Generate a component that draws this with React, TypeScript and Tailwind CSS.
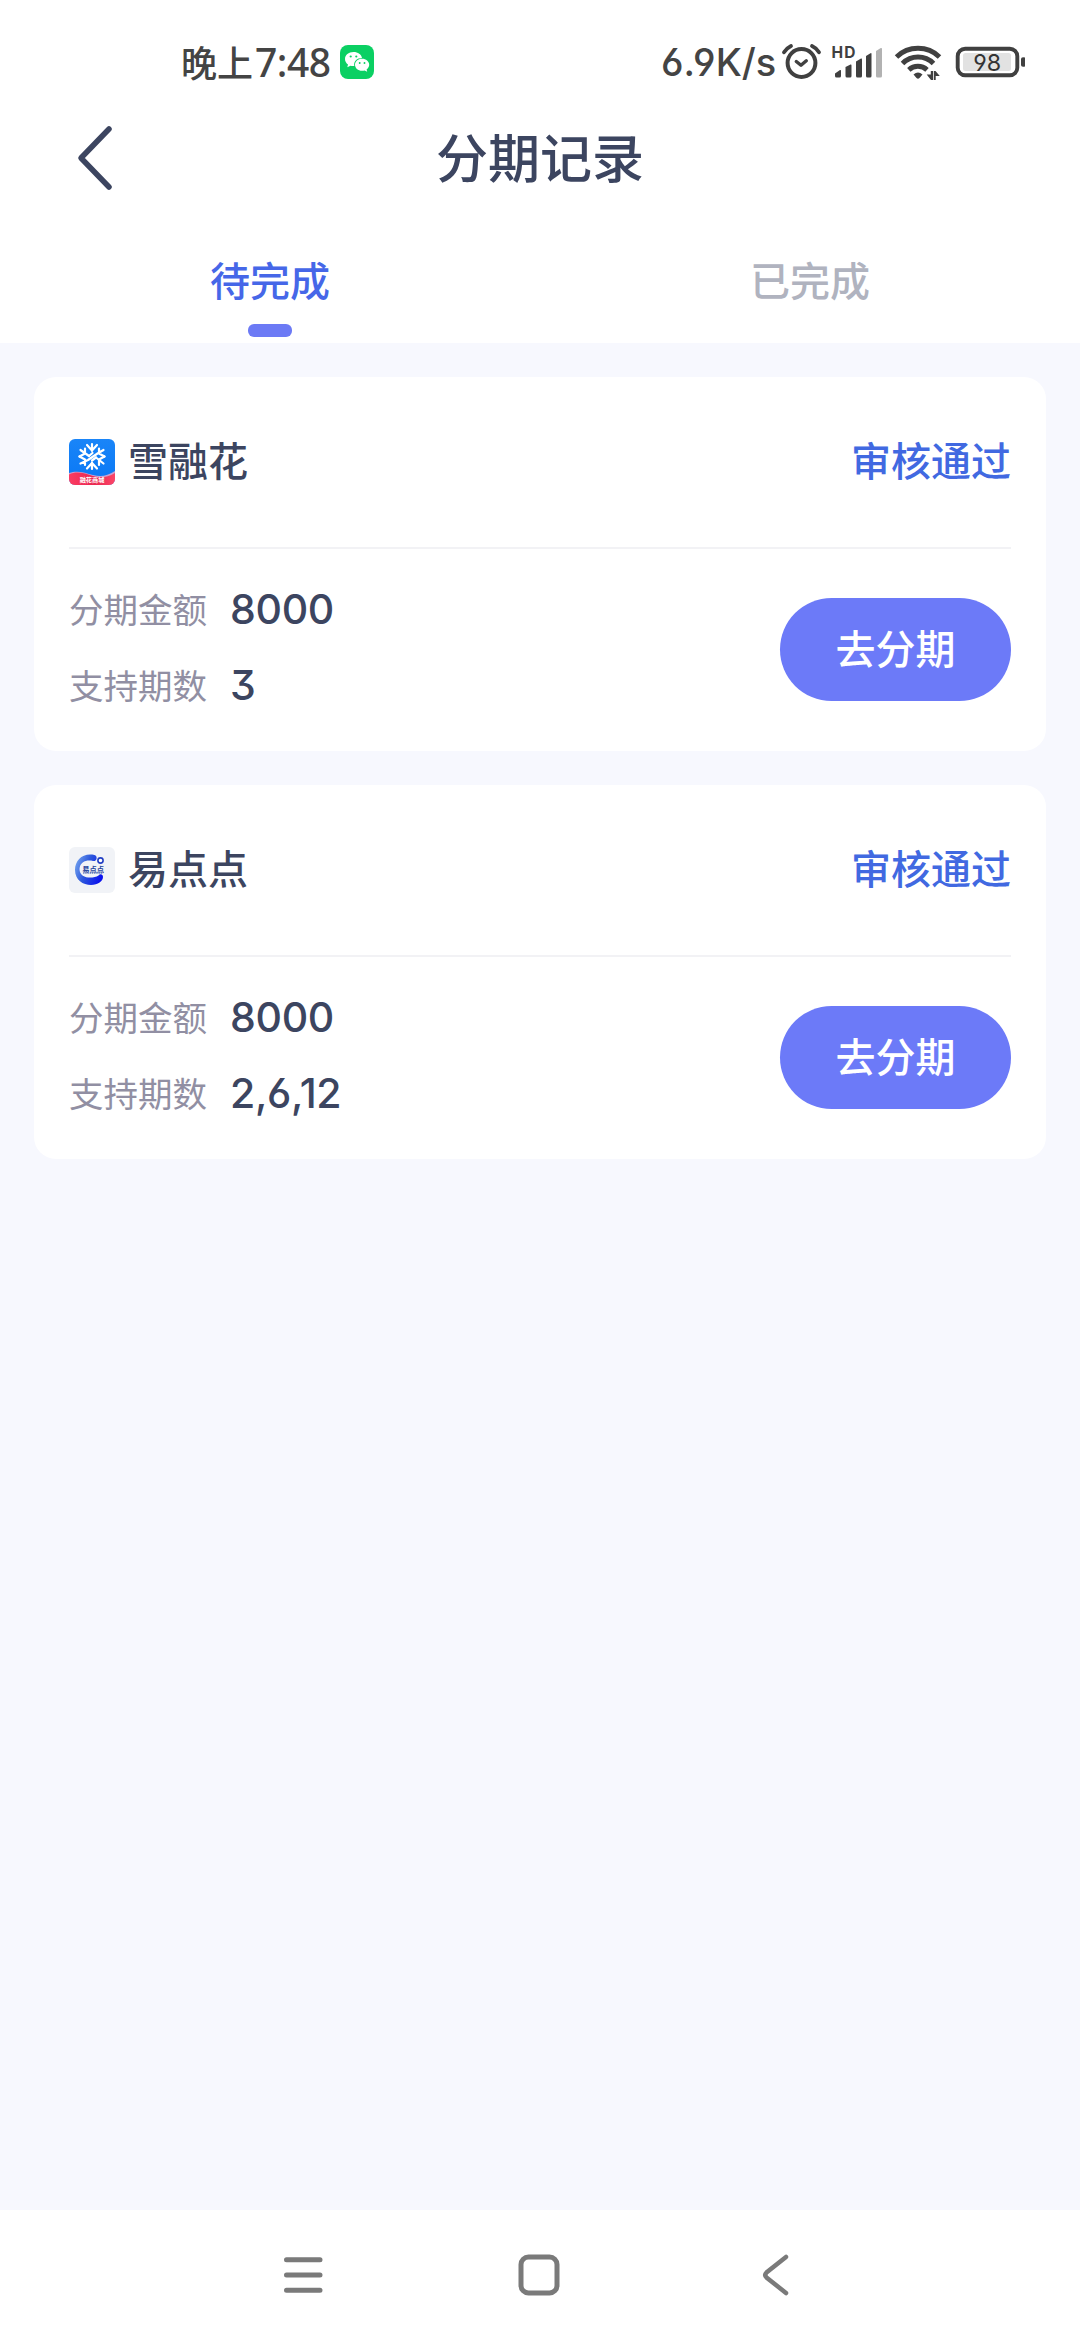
import { useState } from 'react';

interface RecordItem {
    id: number;
    name: string;
    status: string;
    amount: string;
    periods: string;
    logo: 'snow' | 'dots';
}

const records: RecordItem[] = [
    { id: 1, name: '雪融花', status: '审核通过', amount: '8000', periods: '3', logo: 'snow' },
    { id: 2, name: '易点点', status: '审核通过', amount: '8000', periods: '2,6,12', logo: 'dots' },
];

const tabs = ['待完成', '已完成'];

function SnowLogo() {
    return (
        <svg width="46" height="46" viewBox="0 0 46 46" className="rounded-[6px]">
            <defs>
                <linearGradient id="snowBg" x1="0" y1="0" x2="0" y2="1">
                    <stop offset="0" stopColor="#1a85f8" />
                    <stop offset="1" stopColor="#0877f5" />
                </linearGradient>
                <linearGradient id="snowRed" x1="0" y1="0" x2="1" y2="0">
                    <stop offset="0" stopColor="#fb3c62" />
                    <stop offset="0.55" stopColor="#ea2750" />
                    <stop offset="1" stopColor="#fb4668" />
                </linearGradient>
            </defs>
            <rect width="46" height="46" fill="url(#snowBg)" />
            <path d="M0 34C9 31 16 34 24 36S38 37 46 32V46H0Z" fill="#c9a0d0" />
            <path d="M0 35.5C8 31.5 16 34.5 24 37S38 38.5 46 34V46H0Z" fill="url(#snowRed)" />
            <g stroke="#fff" strokeWidth="2.2" strokeLinecap="round" strokeLinejoin="round" fill="none">
                <path d="M23 5V12M18 6L23 11.5L28 6" />
                <path d="M23 30V23.500M18 29.500L23 24L28 29.500" />
                <path d="M11.500 11L20 17M10.500 17.500L16 14.500V9.500" />
                <path d="M34.500 24.500L27 18.500M35.500 17.500L30 20.500V26" />
                <path d="M34.500 11L28.500 14.500L19 21L11.500 24.500M30 9.500V14.500L35.500 17.500M10.500 17.500L16 20.500V26" />
                <path d="M20 17L23.500 14M27 18.500L23 21.500" />
            </g>
            <text x="23" y="43" textAnchor="middle" fontSize="6.2" fontWeight="700" fill="#fff">融花商城</text>
        </svg>
    );
}

function DotsLogo() {
    return (
        <svg width="46" height="46" viewBox="0 0 46 46" className="rounded-[6px]">
            <defs>
                <linearGradient id="ring" x1="0" y1="0.2" x2="1" y2="0.6">
                    <stop offset="0" stopColor="#74a4ee" />
                    <stop offset="0.45" stopColor="#2c57dc" />
                    <stop offset="1" stopColor="#0b12ee" />
                </linearGradient>
            </defs>
            <rect width="46" height="46" fill="#f1f3f7" />
            <path
                d="M25.500 8C14 5.500 6 13 6 23C6 33 14 38 22 38C29 38 34 34 34 30C34 27 31 26.500 29.500 28.500C24 32 10.500 32 10.500 22C11 14.500 18 12.500 24 14C28 15 29 9 25.500 8Z"
                fill="url(#ring)"
            />
            <circle cx="31.500" cy="13.500" r="2.600" fill="#fff" stroke="#2340c4" strokeWidth="1.600" />
            <text x="24.200" y="24.500" textAnchor="middle" fontSize="7.300" fontWeight="700" fill="#26449c">易点点</text>
            <path d="M14 26.200H34" stroke="#6680c0" strokeWidth="1" strokeDasharray="1.500 0.700" />
        </svg>
    );
}

function WechatIcon() {
    return (
        <svg width="34" height="34" viewBox="0 0 34 34" className="ml-[8px]">
            <rect width="34" height="34" rx="8" fill="#0bd063" />
            <path d="M13.500 7C8.500 7 5 10 5 14C5 16.300 6.200 18.200 8 19.500L7.300 22.300L10.500 20.700C11.500 21 13 21.200 14.300 21C13.400 16.500 17 13 22 13C21.400 9.500 18 7 13.500 7Z" fill="#fff" />
            <path d="M22 13.700C18 13.700 15 16.400 15 19.800C15 23.200 18 25.800 22 25.800C22.900 25.800 23.800 25.700 24.600 25.400L27.200 26.800L26.600 24.400C28.200 23.300 29.200 21.700 29.200 19.800C29.200 16.400 26 13.700 22 13.700Z" fill="#fff" />
            <g fill="#0bd063">
                <circle cx="10.700" cy="11.500" r="1.100" />
                <circle cx="16.300" cy="11.500" r="1.100" />
                <circle cx="19.700" cy="18" r="0.950" />
                <circle cx="24.500" cy="18" r="0.950" />
            </g>
        </svg>
    );
}

function StatusIcons() {
    return (
        <svg width="244" height="40" viewBox="780 42 244 40" fill="none">
            {/* Alarm */}
            <g stroke="#404040" strokeLinecap="round" strokeLinejoin="round">
                <circle cx="800.500" cy="63" r="13.900" strokeWidth="4" />
                <path d="M795.300 61.500L800 65.300L805.300 60.800" strokeWidth="3.400" />
                <path d="M783 52.300Q785.800 48 790 46M811 46Q815.500 48 818 52.300" strokeWidth="3.800" />
            </g>
            {/* Signal */}
            <text x="830.500" y="58" fontSize="15.500" fontWeight="700" fill="#404040" textLength="24" className="font-['Inter',sans-serif]">HD</text>
            <g fill="#404040">
                <path d="M834 73.500L839 70Q840 69.500 840 71V76Q840 77.500 838.500 77.500H835.500Q834 77.500 834 76Z" />
                <path d="M844.500 67L849.500 64.500Q850.500 64 850.500 65.500V76Q850.500 77.500 849 77.500H846Q844.500 77.500 844.500 76Z" />
                <path d="M855 61.500L860 58.500Q861 58 861 59.500V76Q861 77.500 859.500 77.500H856.500Q855 77.500 855 76Z" />
                <path d="M865 56L869.500 53.200Q870.500 52.700 870.500 54V76Q870.500 77.500 869 77.500H866.500Q865 77.500 865 76Z" />
            </g>
            <path d="M875 51L879.800 48Q881 47.500 881 49V76Q881 77.500 879.500 77.500H876.500Q875 77.500 875 76Z" fill="#b2b2b2" />
            {/* Wifi */}
            <g stroke="#404040" strokeWidth="5">
                <path d="M895.500 57A31 31 0 0 1 938.500 57" />
                <path d="M901.500 63.500A22 22 0 0 1 932.500 63.500" />
                <path d="M907.800 69.800A13.500 13.500 0 0 1 926 69.800" />
            </g>
            <path d="M912.500 74.500Q917 70.500 921.500 74.500L918.500 78Q917 79.500 915.500 78Z" fill="#404040" />
            <path d="M925.700 74.500H929.800V71H932V80H930Z M938.800 76H934.700V80H932.800V71H934.500Z" fill="#404040" />
            {/* Battery */}
            <rect x="956.700" y="48.700" width="59.600" height="26.600" rx="7.500" stroke="#404040" strokeWidth="3.900" />
            <rect x="962" y="53" width="48" height="18" rx="2.500" fill="#e2e2e2" />
            <path d="M1024 57.500V66.500Q1020 67.500 1020 65V59Q1020 56.500 1024 57.500Z" fill="#404040" />
            <text x="986.300" y="70.500" fontSize="23.500" fill="#333" textAnchor="middle" textLength="28" lengthAdjust="spacingAndGlyphs" className="font-['Inter',sans-serif] [font-feature-settings:'cv03','cv04']">98</text>
        </svg>
    );
}

function StatusBar() {
    return (
        <div className="flex h-[84px] items-start justify-between pl-[181px] pr-[55px] text-[#444]">
            <div className="flex items-center pt-[41px]">
                <span className="-mt-[3px] text-[36px] leading-[42px] font-medium">晚上</span>
                <span className="ml-[2px] w-[77px] font-['Noto_Sans',sans-serif] text-[39px] leading-[42px] font-medium tracking-[-0.5px]">7:48</span>
                <WechatIcon />
            </div>
            <div className="flex items-center pt-[41px]">
                <span className="w-[120px] font-['Inter',sans-serif] text-[38px] leading-[42px] font-[450] whitespace-nowrap [font-feature-settings:'cv03','cv04']">6.9K/s</span>
                <StatusIcons />
            </div>
        </div>
    );
}

function RecordCard({ name, status, amount, periods, logo }: RecordItem) {
    return (
        <div className="h-[374px] rounded-[22px] bg-white px-[35px]">
            <div className="flex h-[172px] items-center justify-between border-b-2 border-[#f2f2f5]">
                <div className="flex items-center gap-[13px]">
                    {logo === 'snow' ? <SnowLogo /> : <DotsLogo />}
                    <span className="pb-[6px] text-[40px] leading-[46px] font-medium text-[#3c4560]">{name}</span>
                </div>
                <span className="pb-[6px] text-[40px] leading-[46px] font-medium text-[#4169e1]">{status}</span>
            </div>
            <div className="flex items-center justify-between pt-[24px]">
                <div className="flex flex-col">
                    {[['分期金额', amount], ['支持期数', periods]].map(([label, value]) => (
                        <div key={label} className="flex h-[76px] items-center">
                            <span className="w-[161px] pb-[5px] text-[34.500px] text-[#918fa3]">{label}</span>
                            <span className="pb-[2px] font-['Inter',sans-serif] text-[41px] font-medium tracking-[-0.3px] text-[#3c4560] [font-feature-settings:'cv03','cv04','cv09']">{value}</span>
                        </div>
                    ))}
                </div>
                <button className="h-[103px] w-[231px] rounded-full bg-[#6c7af8] pb-[5px] text-[40px] leading-[46px] font-medium text-white">
                    去分期
                </button>
            </div>
        </div>
    );
}

export default function App() {
    const [active, setActive] = useState(0);

    return (
        <div className="flex h-[2340px] w-[1080px] flex-col overflow-hidden bg-[#f7f8fe] font-['Noto_Sans_CJK_SC',sans-serif]">
            <header className="h-[343px] bg-white">
                <StatusBar />
                <div className="grid h-[148px] grid-cols-3 items-center">
                    <button className="pl-[75px]">
                        <svg width="40" height="68" viewBox="0 0 40 68" fill="none" stroke="#3c4560" strokeWidth="5.500" strokeLinecap="round" strokeLinejoin="round">
                            <path d="M34 5L6 34L34 63" />
                        </svg>
                    </button>
                    <h1 className="pb-[5px] text-center text-[52px] leading-[60px] font-medium whitespace-nowrap text-[#3c4560]">分期记录</h1>
                </div>
                <div className="grid grid-cols-2">
                    {tabs.map((tab, i) => (
                        <button key={tab} onClick={() => setActive(i)} className="flex flex-col items-center pt-[24px]">
                            <span className={`text-[40px] leading-[46px] font-medium ${active === i ? 'text-[#4667e8]' : 'text-[#b0b3bf]'}`}>{tab}</span>
                            {active === i && <span className="mt-[22px] h-[13px] w-[44px] rounded-[6px] bg-[#6c7af5]" />}
                        </button>
                    ))}
                </div>
            </header>

            <main className="flex flex-1 flex-col gap-[34px] px-[34px] pt-[34px]">
                {records.map((item) => (
                    <RecordCard key={item.id} {...item} />
                ))}
            </main>

            {/* System navigation */}
            <nav className="flex h-[130px] items-center bg-white pl-[282px]">
                <svg width="42" height="42" viewBox="0 0 42 42" stroke="#7a7a7a" strokeWidth="5" strokeLinecap="round">
                    <path d="M4.500 5.700H38M4.500 21H38M4.500 36.300H38" />
                </svg>
                <svg width="42" height="42" viewBox="0 0 42 42" fill="none" stroke="#7a7a7a" strokeWidth="5" className="ml-[194px]">
                    <rect x="3" y="3" width="36" height="36" rx="7.500" />
                </svg>
                <svg width="28" height="42" viewBox="0 0 28 42" fill="none" stroke="#7a7a7a" strokeWidth="4.500" strokeLinecap="round" className="ml-[202px]">
                    <path d="M24 3L4.500 18.500Q2 21 4.500 23.500L24 39" />
                </svg>
            </nav>
        </div>
    );
}
